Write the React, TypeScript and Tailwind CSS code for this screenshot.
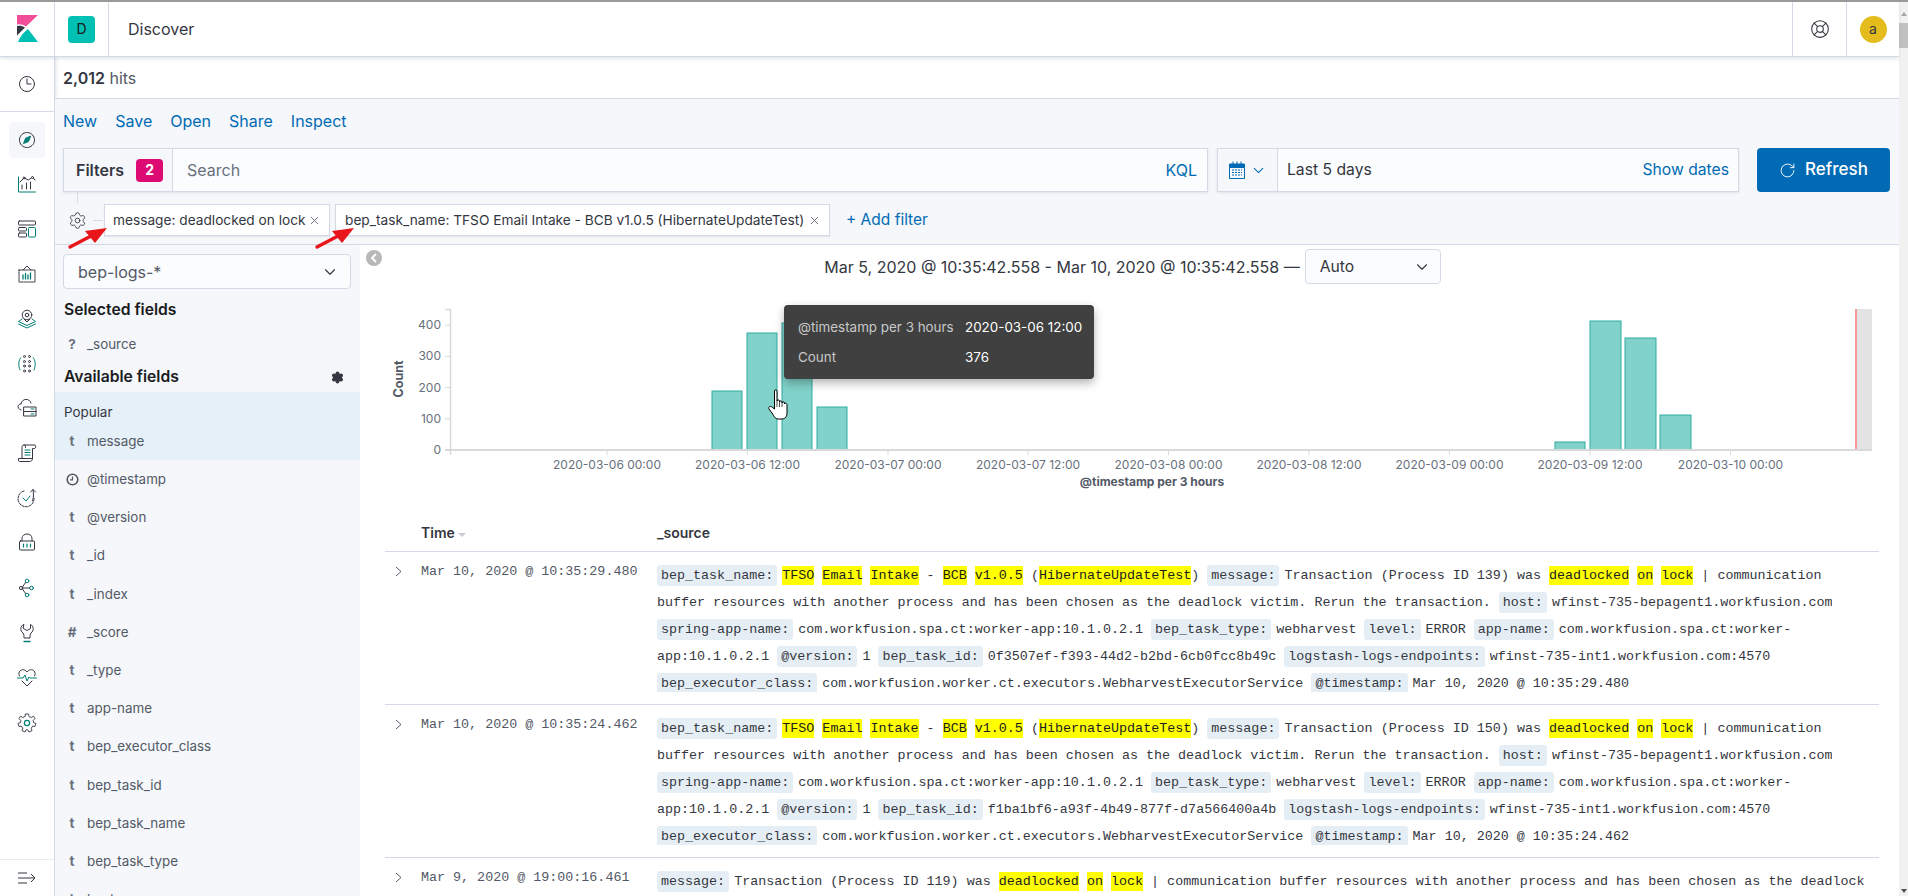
import { ChevronDown, LifeBuoy, RotateCw, Settings, X } from "lucide-react";
import type { ReactNode } from "react";

const DARK = "#343741";
const TEAL = "#017d73";

const NavIcon = ({ children }: { children: ReactNode }) => (
  <svg width="20" height="20" viewBox="0 0 20 20" fill="none" stroke={DARK} strokeWidth="1" strokeLinecap="round" strokeLinejoin="round">
    {children}
  </svg>
);

const navIcons: ReactNode[] = [
  <>
    <path d="M1.5 3 V18 H18.5" stroke={TEAL} />
    <path d="M3 8 L7 4 L11.5 6 L15.5 3 L18 6" />
    <circle cx="7" cy="4" r="1" fill="#fff" />
    <circle cx="15.5" cy="3.5" r="1" fill="#fff" />
    <path d="M5 11 V15 M9.5 9 V15 M13.5 8 V15" />
  </>,
  <>
    <rect x="1.5" y="2" width="17" height="4" rx="1" />
    <rect x="1.5" y="8.5" width="8" height="3.5" rx="1" />
    <rect x="1.5" y="14" width="8" height="4" rx="1" />
    <rect x="11.5" y="8.5" width="7" height="9.5" rx="1" stroke={TEAL} />
  </>,
  <>
    <path d="M2 6 H18 V18 H2 Z" strokeDasharray="1.5 1" />
    <path d="M6 6 L10 2 L14 6" />
    <path d="M6 11 V15 M8.5 9.5 V15 M11 11 V15 M13.5 9 V15" stroke={TEAL} strokeWidth="1.3" />
  </>,
  <>
    <circle cx="10" cy="6" r="4.8" />
    <circle cx="10" cy="6" r="1.8" />
    <path d="M7 10 L10 13 L13 10" />
    <path d="M5 10 L1.5 12.5 L10 16.5 L18.5 12.5 L15 10 M1.5 15 L10 19 L18.5 15" stroke={TEAL} />
  </>,
  <>
    <path d="M4 3.5 C1.5 5 1 12 3 16 M16 3.5 C18.5 5 19 12 17 16" stroke={TEAL} />
    <circle cx="7.5" cy="2.5" r="1" />
    <circle cx="12.5" cy="2.5" r="1" />
    <circle cx="7.5" cy="7.5" r="1" />
    <circle cx="12.5" cy="7.5" r="1" />
    <circle cx="7.5" cy="12" r="1" />
    <circle cx="12.5" cy="12" r="1" />
    <circle cx="7.5" cy="17" r="1" />
    <circle cx="12.5" cy="17" r="1" />
  </>,
  <>
    <path d="M4 12 C0 11 0 6 4 6 C5 0 13 0 14 5" />
    <path d="M7 9 H19 V18 H7 Z M7 13.5 H19" />
    <path d="M14 11 H17 M14 16 H17" stroke={TEAL} />
  </>,
  <>
    <path d="M5 15.5 V4.5 C5 2.5 6 2 7 2 H18 C19 2 19 5.5 17.5 5.5 H15.5 V15.5 M7 2 C9 2 8.5 3.5 8.5 4.5" />
    <path d="M5 15.5 H1.5 C1 18 2 18.5 3 18.5 H12.5 C14 18.5 15.5 17.5 15.5 15.5 H5" />
    <path d="M8 7 H13 M8 9.5 H13 M8 12 H13" stroke={TEAL} />
  </>,
  <>
    <path d="M7 3 A8 8 0 1 0 17 10" strokeDasharray="2.5 1.2" />
    <path d="M6 10 L9 13 L13 8" stroke={TEAL} />
    <path d="M15.5 13 C17 9 16.5 5 16 1.5 M13.5 4 L16 1.5 L18.5 4" />
  </>,
  <>
    <path d="M5 8 V5.5 C5 -0.5 15 -0.5 15 5.5 V8" />
    <rect x="2.5" y="8" width="15" height="9" rx="1" />
    <path d="M6.5 11 V14 M10 11 V14 M13.5 11 V14" stroke={TEAL} strokeWidth="1.2" />
  </>,
  <g stroke={TEAL}>
    <circle cx="10" cy="3" r="1.8" />
    <circle cx="14.5" cy="10" r="1.8" />
    <circle cx="10" cy="17" r="1.8" />
    <circle cx="4" cy="10" r="1.6" stroke={DARK} />
    <path d="M5.5 9 L8.5 4.5 M5.5 10 H12.7 M5.5 11 L8.5 15.5" stroke={DARK} />
  </g>,
  <>
    <path d="M6.5 1.5 C3 3 3 8 6 10 C7 11 7 13 7 15 H13 C13 13 13 11 14 10 C17 8 17 3 13.5 1.5 V5.5 L10 7.5 L6.5 5.5 Z" />
    <path d="M7 18.5 H13" stroke={TEAL} strokeWidth="1.3" />
  </>,
  <>
    <path d="M2.5 8 C-0.5 3 6.5 -1 10 4 C13.5 -1 20.5 3 17.5 8 M5 13 L10 18 L15 13" />
    <path d="M0.5 10 H6 L8 7 L10 13 L12 9 L13 10 H19.5" stroke={TEAL} />
  </>,
  <>
    <path d="M8.5 1 H11.5 L12 3.5 L14.2 4.5 L16.5 3.2 L18 5.5 L16.2 7.5 L16.5 9.5 L19 10.5 L18 13.5 L15.8 13 L14.2 15.2 L15 17.7 L12 19 L10.8 16.8 H9.2 L8 19 L5 17.7 L5.8 15.2 L4.2 13 L2 13.5 L1 10.5 L3.5 9.5 L3.8 7.5 L2 5.5 L3.5 3.2 L5.8 4.5 L8 3.5 Z" strokeWidth="0.9" />
    <circle cx="10" cy="10" r="2.6" stroke={TEAL} strokeWidth="1.2" />
  </>,
];

const Nav = () => (
  <nav className="flex w-[55px] shrink-0 flex-col border-r border-[#d3dae6] bg-white shadow-[2px_0_3px_rgba(152,162,179,0.2)]">
    <div className="flex h-[55px] shrink-0 items-center justify-center border-b border-[#d3dae6]">
      <svg width="20" height="20" viewBox="0 0 20 20" fill="none" stroke={DARK} strokeWidth="1" strokeLinecap="round">
        <circle cx="10" cy="10" r="7.5" />
        <path d="M10 5 V10 H14" />
      </svg>
    </div>
    <div className="flex flex-col items-center pt-[10px]">
      <div className="flex h-9 w-9 items-center justify-center rounded bg-[#f5f7fa]">
        <NavIcon>
          <circle cx="10" cy="10" r="7.5" strokeDasharray="2 0.6" />
          <path d="M13.5 6.5 L11.5 11.5 L6.5 13.5 L8.5 8.5 Z" fill={TEAL} stroke={TEAL} />
        </NavIcon>
      </div>
      <div className="mt-[3.5px]">
        {navIcons.map((icon, i) => (
          <div key={i} className="flex h-[44.9px] w-9 items-center justify-center">
            <NavIcon>{icon}</NavIcon>
          </div>
        ))}
      </div>
    </div>
    <div className="mt-auto flex h-[37px] items-center justify-center border-t border-[#e8ebf0]">
      <svg width="20" height="16" viewBox="0 0 20 16" fill="none" stroke={DARK} strokeWidth="1">
        <path d="M1 3 H10 M1 8 H17 M1 13 H10 M14 4 L18 8 L14 12" />
      </svg>
    </div>
  </nav>
);

const fields: [string, string][] = [
  ["clock", "@timestamp"],
  ["t", "@version"],
  ["t", "_id"],
  ["t", "_index"],
  ["#", "_score"],
  ["t", "_type"],
  ["t", "app-name"],
  ["t", "bep_executor_class"],
  ["t", "bep_task_id"],
  ["t", "bep_task_name"],
  ["t", "bep_task_type"],
  ["t", "host"],
];

const FieldRow = ({ type, name, className }: { type: string; name: string; className: string }) => (
  <div className={`flex items-center pl-[9px] text-[13.4px] text-[#535966] ${className}`}>
    <span className="flex w-[23px] justify-center pr-[7px] font-bold text-[#69707d]">
      {type === "clock" ? (
        <svg width="13" height="13" viewBox="0 0 13 13" fill="none" stroke="#535966" strokeWidth="1.6">
          <circle cx="6.5" cy="6.5" r="5.3" />
          <path d="M6.5 3.5 V6.8 H4" strokeWidth="1.2" />
        </svg>
      ) : (
        type
      )}
    </span>
    <span>{name}</span>
  </div>
);

const Sidebar = () => (
  <div className="flex h-full w-[305px] shrink-0 flex-col overflow-hidden bg-[#f5f7fa]">
    <div className="ml-[8px] mt-[9px] flex h-[35px] w-[288px] shrink-0 items-center justify-between rounded border border-[#d3dae6] bg-[#fbfcfd] pl-[14px] pr-[11px] text-base text-[#535966]">
      bep-logs-*
      <ChevronDown size={18} strokeWidth={1.5} className="text-[#343741]" />
    </div>
    <div className="mt-[9px] flex h-6 shrink-0 items-center pl-[9px] text-[15.7px] font-semibold text-[#1a1c21]">Selected fields</div>
    <FieldRow type="?" name="_source" className="mt-[3px] h-[38px] shrink-0" />
    <div className="mt-[2px] flex h-6 shrink-0 items-center justify-between pl-[9px] pr-[16px] text-[15.7px] font-semibold text-[#1a1c21]">
      Available fields
      <Settings size={13} fill="#343741" strokeWidth={2.5} className="text-[#343741]" />
    </div>
    <div className="mt-[3px] shrink-0 bg-[#e6f0f8]">
      <div className="flex h-[30px] items-end pl-[9px] text-[13.4px] text-[#343741]">Popular</div>
      <FieldRow type="t" name="message" className="h-[38px]" />
    </div>
    {fields.map(([type, name]) => (
      <FieldRow key={name} type={type} name={name} className="h-[38.2px] shrink-0" />
    ))}
  </div>
);

const xTicks = [
  [607, "2020-03-06 00:00"],
  [747.5, "2020-03-06 12:00"],
  [888, "2020-03-07 00:00"],
  [1028, "2020-03-07 12:00"],
  [1168.5, "2020-03-08 00:00"],
  [1309, "2020-03-08 12:00"],
  [1449.5, "2020-03-09 00:00"],
  [1590, "2020-03-09 12:00"],
  [1730.5, "2020-03-10 00:00"],
] as const;

const yTicks = [
  [450, "0"],
  [418.8, "100"],
  [387.6, "200"],
  [356.4, "300"],
  [325.2, "400"],
] as const;

const bars = [
  [712, 30, 391],
  [747, 30, 333],
  [782, 30, 323],
  [817, 30, 407],
  [1555, 30, 442],
  [1590, 31, 321],
  [1625, 31, 338],
  [1660, 31, 415],
];

const Histogram = () => (
  <div className="relative h-[226px]">
    <svg width="1540" height="226" viewBox="360 284 1540 226" fontFamily="Inter, sans-serif" fontSize="12" fill="#69707d">
      <rect x="1856" y="309" width="16" height="141" fill="#e3e3e3" />
      <rect x="1855" y="309" width="2" height="141" fill="#f19a9a" />
      {bars.map(([x, w, top]) => (
        <rect key={x} x={x} y={top} width={w} height={450 - top} fill="#81d2ca" stroke="#2eaca1" strokeWidth="1" />
      ))}
      <rect x="1835" y="449" width="15" height="1" fill="#81d2ca" />
      <path d="M450.5 309 V455" stroke="#d9d9d9" strokeWidth="1.5" />
      <path d="M445 309.5 H450" stroke="#d9d9d9" strokeWidth="1.5" />
      <path d="M445 450 H1872" stroke="#d9d9d9" strokeWidth="2" />
      {yTicks.map(([y, label]) => (
        <g key={label}>
          <path d={`M445 ${y} H450`} stroke="#d9d9d9" />
          <text x="441" y={y + 4} textAnchor="end">{label}</text>
        </g>
      ))}
      {xTicks.map(([x, label]) => (
        <g key={label}>
          <path d={`M${x} 450 V455`} stroke="#d9d9d9" />
          <text x={x} y="469" textAnchor="middle">{label}</text>
        </g>
      ))}
      <text x="1152" y="486" textAnchor="middle" fontWeight="700" fontSize="12" fill="#535966">@timestamp per 3 hours</text>
      <text transform="translate(403 379) rotate(-90)" textAnchor="middle" fontWeight="700" fontSize="12.5" fill="#535966">Count</text>
    </svg>
    <div className="absolute left-[424px] top-[21px] flex h-[74px] w-[310px] flex-col justify-center gap-[10px] rounded bg-[#404040] pl-[14px] text-[13.4px] shadow-[0_4px_10px_rgba(0,0,0,0.3)]">
      <div className="flex">
        <span className="w-[167px] text-[#c8c8c8]">@timestamp per 3 hours</span>
        <span className="text-white">2020-03-06 12:00</span>
      </div>
      <div className="flex">
        <span className="w-[167px] text-[#c8c8c8]">Count</span>
        <span className="text-white">376</span>
      </div>
    </div>
    <svg className="absolute left-[408px] top-[105px]" width="21" height="31" viewBox="0 0 21 31" fill="#fff" stroke="#000" strokeWidth="1" strokeLinejoin="round">
      <path d="M6.5 2 C6.5 0.5 9 0.5 9 2 V12 C9 10.5 11.5 10.5 11.5 12 V13 C11.5 11.5 14 11.5 14 13 V14 C14 12.5 16.5 12.5 16.5 14 V15 C16.5 13.5 19 14 19 15.5 V24 C19 27 17.5 30 14 30 H10 C7 30 6 27 4 24 L1 20 C0 18 2 16.5 4 18 L6.5 20 Z" />
      <path d="M9 12 V18 M11.5 13 V18 M14 14 V18" strokeWidth="0.7" />
    </svg>
  </div>
);

const Doc = ({ lines }: { lines: string[] }) => (
  <div className="h-[127px] overflow-hidden">
    {lines.map((line, i) => (
      <div key={i} className="h-[27px] whitespace-pre leading-[22px]">
        {line.split(/(\[[^\]]+\]|\{[^}]+\})/).map((part, j) => {
          if (part.startsWith("["))
            return (
              <span key={j} className="mr-[5px] rounded-[3px] bg-[#e6eef5] px-[4px] py-[3px]">
                {part.slice(1, -1)}
              </span>
            );
          if (part.startsWith("{"))
            return (
              <span key={j} className="bg-[#ffff00] py-[2px] text-[#1a1c21]">
                {part.slice(1, -1)}
              </span>
            );
          return <span key={j}>{part}</span>;
        })}
      </div>
    ))}
  </div>
);

const docLines = (pid: string, taskId: string, stamp: string) => [
  `[bep_task_name:]{TFSO} {Email} {Intake} - {BCB} {v1.0.5} ({HibernateUpdateTest}) [message:]Transaction (Process ID ${pid}) was {deadlocked} {on} {lock} | communication`,
  "buffer resources with another process and has been chosen as the deadlock victim. Rerun the transaction. [host:]wfinst-735-bepagent1.workfusion.com",
  "[spring-app-name:]com.workfusion.spa.ct:worker-app:10.1.0.2.1 [bep_task_type:]webharvest [level:]ERROR [app-name:]com.workfusion.spa.ct:worker-",
  `app:10.1.0.2.1 [@version:]1 [bep_task_id:]${taskId} [logstash-logs-endpoints:]wfinst-735-int1.workfusion.com:4570`,
  `[bep_executor_class:]com.workfusion.worker.ct.executors.WebharvestExecutorService [@timestamp:]${stamp}`,
];

const rows = [
  { time: "Mar 10, 2020 @ 10:35:29.480", lines: docLines("139", "0f3507ef-f393-44d2-b2bd-6cb0fcc8b49c", "Mar 10, 2020 @ 10:35:29.480") },
  { time: "Mar 10, 2020 @ 10:35:24.462", lines: docLines("150", "f1ba1bf6-a93f-4b49-877f-d7a566400a4b", "Mar 10, 2020 @ 10:35:24.462") },
  {
    time: "Mar 9, 2020 @ 19:00:16.461",
    lines: ["[message:]Transaction (Process ID 119) was {deadlocked} {on} {lock} | communication buffer resources with another process and has been chosen as the deadlock"],
  },
];

const ResultsTable = () => (
  <div className="ml-[25px] mr-[20px]">
    <div className="flex h-[42px] items-center border-b border-[#d3dae6] pt-[4px] text-sm font-semibold text-[#343741]">
      <div className="flex w-[272px] items-center pl-[36px]">
        Time
        <span className="ml-[3px] mt-[5px] h-0 w-0 border-x-[4px] border-t-[4px] border-x-transparent border-t-[#c7ccd4]" />
      </div>
      <div>_source</div>
    </div>
    {rows.map((row) => (
      <div key={row.time} className="flex border-b border-[#d3dae6] pb-[12px] pt-[13px] font-['Liberation_Mono',monospace] text-[13.36px]">
        <div className="-mt-[1px] flex w-[272px] shrink-0 items-start">
          <svg className="ml-[9px] mr-[18px] mt-[1px]" width="9" height="13" viewBox="0 0 9 13" fill="none" stroke="#535966" strokeWidth="1">
            <path d="M2 2 L7 6.5 L2 11" />
          </svg>
          <span className="-mt-[1px] leading-[18px] text-[#535966]">{row.time}</span>
        </div>
        <Doc lines={row.lines} />
      </div>
    ))}
  </div>
);

const Toolbar = () => (
  <div className="h-[146px] shrink-0 border-b border-[#d3dae6] bg-[#f5f7fa] pl-[8px] pt-[10px]">
    <div className="flex h-6 items-center gap-[18px] text-base text-[#006bb4]">
      <span>New</span>
      <span>Save</span>
      <span>Open</span>
      <span>Share</span>
      <span>Inspect</span>
    </div>
    <div className="mt-[15px] flex h-[44px] items-stretch">
      <div className="flex w-[1145px] items-stretch border border-[#d3dae6] bg-[#fbfcfd] shadow-[0_1px_2px_rgba(152,162,179,0.25)]">
        <div className="flex w-[109px] items-center gap-[12px] border-r border-[#d3dae6] bg-[#f5f7fa] pl-[12px] text-base font-semibold text-[#343741]">
          Filters
          <span className="flex h-[23px] w-[27px] items-center justify-center rounded bg-[#dd0a73] text-sm font-bold text-white">2</span>
        </div>
        <div className="flex flex-1 items-center justify-between pl-[14px] pr-[10px] text-base text-[#69707d]">
          Search
          <span className="text-[#006bb4]">KQL</span>
        </div>
      </div>
      <div className="ml-[9px] flex w-[522px] items-stretch border border-[#d3dae6] bg-[#fbfcfd] shadow-[0_1px_2px_rgba(152,162,179,0.25)]">
        <div className="flex w-[60px] items-center justify-center gap-[5px] border-r border-[#d3dae6] bg-[#f5f7fa] text-[#006bb4]">
          <svg width="16" height="18" viewBox="0 0 16 18" fill="none" stroke="#006bb4" strokeWidth="1">
            <path d="M0.5 3 H15.5 V6.5 H0.5 Z" fill="#006bb4" />
            <path d="M0.5 6.5 V17.5 H15.5 V6.5" />
            <path d="M4 0.5 V3 M8 0.5 V3 M12 0.5 V3" />
            <path d="M3 9 H13 M3 11.5 H13 M3 14 H13" strokeDasharray="2 1" />
          </svg>
          <ChevronDown size={17} strokeWidth={1.5} />
        </div>
        <div className="flex flex-1 items-center justify-between px-[9px] text-[15.7px] text-[#343741]">
          Last 5 days
          <span className="text-[#006bb4]">Show dates</span>
        </div>
      </div>
      <div className="ml-[18px] flex w-[133px] items-center justify-center gap-[9px] rounded bg-[#006bb4] text-[17px] font-medium text-white">
        <RotateCw size={17} strokeWidth={1.3} />
        Refresh
      </div>
    </div>
    <div className="relative mt-[12px] flex h-[32px] items-stretch whitespace-nowrap text-[13.7px] text-[#343741]">
      <span className="absolute -top-[12px] left-[14px] h-[11px] w-px bg-[#d3dae6]" />
      <div className="flex w-[41px] items-center">
        <Settings size={19} strokeWidth={1.1} className="ml-[5px] shrink-0 text-[#343741]" />
        <span className="ml-[6px] h-px w-[10px] bg-[#d3dae6]" />
      </div>
      <div className="flex w-[226px] items-center justify-between border border-[#d3dae6] bg-white pl-[8px] pr-[8px] shadow-[0_1px_1px_rgba(152,162,179,0.2)]">
        message: deadlocked on lock
        <X size={13} strokeWidth={1.5} className="text-[#535966]" />
      </div>
      <div className="ml-[5px] flex w-[495px] items-center justify-between border border-[#d3dae6] bg-white pl-[9px] pr-[8px] shadow-[0_1px_1px_rgba(152,162,179,0.2)]">
        bep_task_name: TFSO Email Intake - BCB v1.0.5 (HibernateUpdateTest)
        <X size={13} strokeWidth={1.5} className="text-[#535966]" />
      </div>
      <div className="ml-[16px] flex items-center text-[15.5px] text-[#006bb4]">+ Add filter</div>
    </div>
  </div>
);

const RedArrow = ({ className }: { className: string }) => (
  <svg className={`pointer-events-none absolute ${className}`} width="42" height="24" viewBox="0 0 42 24">
    <path d="M3 21 L24 10" stroke="#e8161b" strokeWidth="3.4" strokeLinecap="round" />
    <path d="M40 2 L18 5 L28 17 Z" fill="#e8161b" />
  </svg>
);

const App = () => (
  <div className="flex h-[896px] w-[1908px] flex-col overflow-hidden bg-white font-['Inter',sans-serif] text-[#343741]">
    <div className="h-[2px] shrink-0 bg-[#9a9a9a]" />
    <div className="flex min-h-0 flex-1">
      <div className="flex w-[1899px] flex-col">
        <header className="z-10 flex h-[55px] shrink-0 items-stretch border-b border-[#d3dae6] bg-white shadow-[0_2px_3px_rgba(152,162,179,0.25)]">
          <div className="flex w-[55px] items-center border-r border-[#d3dae6] pl-[17px]">
            <svg width="22" height="28" viewBox="0 0 22 28">
              <path d="M0 0 H21 L9 11.5 C6 9.5 3 9 0 9.5 Z" fill="#f04e98" />
              <path d="M0 11 C3 10.5 5.5 11 8 12.5 L0 20.5 Z" fill="#343741" />
              <path d="M11 14 L21 27 H1 C3 21.5 7 17 11 14 Z" fill="#00bfb3" />
            </svg>
          </div>
          <div className="flex w-[54px] items-center justify-center border-r border-[#d3dae6]">
            <div className="flex h-[27px] w-[27px] items-center justify-center rounded bg-[#00bfb3] text-sm text-[#1a1c21]">D</div>
          </div>
          <div className="flex flex-1 items-center pl-[19px] text-base text-[#343741]">Discover</div>
          <div className="flex w-[54px] items-center justify-center border-l border-[#d3dae6]">
            <LifeBuoy size={20} strokeWidth={1.3} className="text-[#343741]" />
          </div>
          <div className="flex w-[53px] items-center justify-center border-l border-[#d3dae6]">
            <div className="flex h-[27px] w-[27px] items-center justify-center rounded-full bg-[#e4bd1c] text-sm text-[#343741]">a</div>
          </div>
        </header>
        <div className="flex min-h-0 flex-1">
          <Nav />
          <main className="relative flex min-w-0 flex-1 flex-col overflow-hidden">
            <div className="flex h-[42px] shrink-0 items-center border-b border-[#d3dae6] pl-[8px] text-base text-[#535966]">
              <span className="font-semibold text-[#343741]">2,012</span>&nbsp;hits
            </div>
            <Toolbar />
            <RedArrow className="left-[12px] top-[169px]" />
            <RedArrow className="left-[259px] top-[169px]" />
            <div className="flex min-h-0 flex-1">
              <Sidebar />
              <section className="relative min-w-0 flex-1">
                <div className="absolute left-[6px] top-[5px] flex h-4 w-4 items-center justify-center rounded-full bg-[#b8b8b8]">
                  <svg width="8" height="10" viewBox="0 0 8 10" fill="none" stroke="#fff" strokeWidth="2">
                    <path d="M6 1 L2 5 L6 9" />
                  </svg>
                </div>
                <div className="flex h-[39px] items-end justify-center gap-[5px] pl-[6px]">
                  <div className="mb-[5px] text-base text-[#343741]">Mar 5, 2020 @ 10:35:42.558 - Mar 10, 2020 @ 10:35:42.558 —</div>
                  <div className="flex h-[35px] w-[136px] items-center justify-between rounded border border-[#d3dae6] bg-[#fbfcfd] pl-[14px] pr-[9px] text-[15.7px]">
                    Auto
                    <ChevronDown size={18} strokeWidth={1.5} />
                  </div>
                </div>
                <Histogram />
                <ResultsTable />
              </section>
            </div>
          </main>
        </div>
      </div>
      <div className="relative flex w-[9px] shrink-0 flex-col bg-[#f1f1f1]">
        <span className="absolute left-[2px] top-[10px] h-0 w-0 border-x-[3px] border-b-[4px] border-x-transparent border-b-[#a3a3a3]" />
        <div className="mt-[21px] h-[25px] bg-[#c1c1c1]" />
        <span className="absolute bottom-[3px] left-[2px] h-0 w-0 border-x-[3px] border-t-[4px] border-x-transparent border-t-[#505050]" />
      </div>
    </div>
  </div>
);

export default App;
